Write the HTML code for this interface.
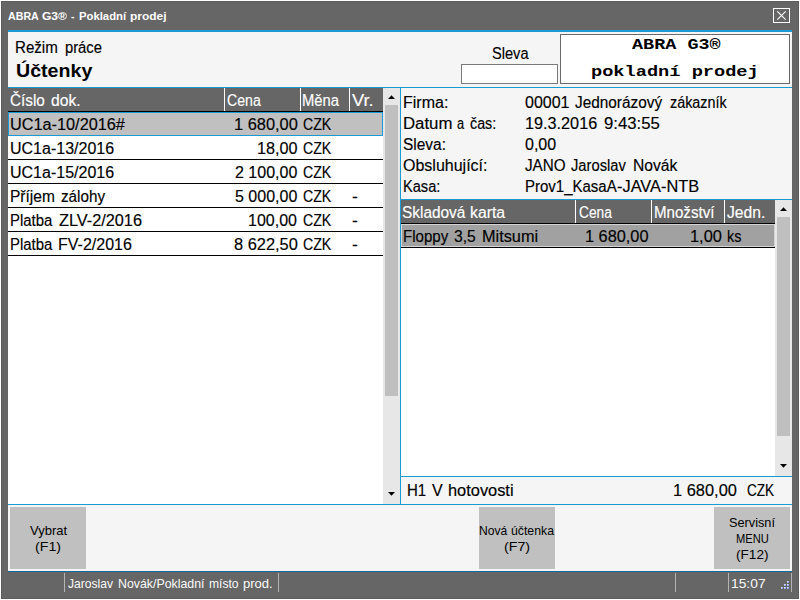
<!DOCTYPE html>
<html lang="cs"><head><meta charset="utf-8"><title>ABRA G3 - Pokladní prodej</title>
<style>
html,body{margin:0;padding:0}
body{width:800px;height:600px;overflow:hidden;background:#fff;position:relative;font-family:"Liberation Sans",sans-serif;font-size:16px;color:#000}
.a{position:absolute}
.t{position:absolute;white-space:nowrap;line-height:20px;height:20px;color:#000;transform-origin:0 0}
.s{font-size:16px;-webkit-text-stroke:0.15px}
.h{font-size:18px;font-weight:bold}
.b{font-size:11px;font-weight:bold}
.m{font-size:13px}
.c{font-family:"Liberation Mono",monospace;font-weight:bold;font-size:15px}
.t.w{color:#fff}
.hl{position:absolute;height:1px;background:#000}
.bl{position:absolute;background:#1b99d4}
.sep{position:absolute;width:1px;background:#fff}
.btn{position:absolute;background:#c0c0c0;width:76px;height:62px;top:507px}
.g{position:absolute;width:2px;height:2px;background:linear-gradient(135deg,#ffffff 0%,#aebcff 50%,#4f6ef2 100%)}
.ss{position:absolute;width:1px;top:573px;height:19px;background:#b4b4b4}
</style></head><body>
<!-- window frame -->
<div class="a" style="left:1px;top:1px;width:798px;height:598px;background:#5c5c5c"></div>
<div class="a" style="left:2px;top:2px;width:796px;height:596px;background:#666"></div>
<!-- close button -->
<svg class="a" style="left:773px;top:8px" width="17" height="15" viewBox="0 0 17 15"><rect x="0.5" y="0.5" width="16" height="14" fill="none" stroke="#fff"/><path d="M4.3 3.3L12.7 11.7M12.7 3.3L4.3 11.7" stroke="#fff" stroke-width="1.1" fill="none"/></svg>
<!-- main panel -->
<div class="a" style="left:8px;top:30px;width:784px;height:542px;background:#f5f5f5"></div>
<div class="bl" style="left:8px;top:30px;width:784px;height:2px"></div>
<div class="a" style="left:461px;top:64px;width:95px;height:18px;border:1px solid #7a7a7a;background:#fff"></div>
<div class="a" style="left:560px;top:34px;width:228px;height:48px;border:1px solid #6a6a6a;background:#fff"></div>
<div class="bl" style="left:8px;top:87px;width:784px;height:1px"></div>
<!-- left table -->
<div class="a" style="left:8px;top:88px;width:375px;height:416px;background:#fff"></div>
<div class="a" style="left:8px;top:88px;width:375px;height:23px;background:#666"></div>
<div class="hl" style="left:8px;top:111px;width:375px"></div>
<div class="sep" style="left:224px;top:88px;height:23px"></div>
<div class="sep" style="left:300px;top:88px;height:23px"></div>
<div class="sep" style="left:349px;top:88px;height:23px"></div>
<div class="a" style="left:8px;top:112px;width:373px;height:22px;background:#c0c0c0;border:1px solid #1b99d4"></div>
<div class="hl" style="left:8px;top:159px;width:375px"></div>
<div class="hl" style="left:8px;top:183px;width:375px"></div>
<div class="hl" style="left:8px;top:207px;width:375px"></div>
<div class="hl" style="left:8px;top:231px;width:375px"></div>
<div class="hl" style="left:8px;top:255px;width:375px"></div>
<!-- left scrollbar -->
<div class="a" style="left:383px;top:88px;width:17px;height:416px;background:#e7e7e7"></div>
<div class="a" style="left:385px;top:105px;width:13px;height:291px;background:#bfbfbf"></div>
<svg class="a" style="left:387px;top:94px" width="9" height="6"><path d="M1 5L4.5 1.2L8 5Z" fill="#000"/></svg>
<svg class="a" style="left:387px;top:491px" width="9" height="6"><path d="M1 1L4.5 4.8L8 1Z" fill="#000"/></svg>
<div class="bl" style="left:400px;top:88px;width:1px;height:416px"></div>
<div class="bl" style="left:401px;top:199px;width:391px;height:1px"></div>
<!-- right table -->
<div class="a" style="left:401px;top:200px;width:374px;height:276px;background:#fff"></div>
<div class="a" style="left:401px;top:200px;width:374px;height:23px;background:#666"></div>
<div class="hl" style="left:401px;top:223px;width:374px"></div>
<div class="sep" style="left:575px;top:200px;height:23px"></div>
<div class="sep" style="left:651px;top:200px;height:23px"></div>
<div class="sep" style="left:724px;top:200px;height:23px"></div>
<div class="a" style="left:401px;top:224px;width:372px;height:21px;background:#a1a1a1;border:1px solid #d4d4d4"></div>
<div class="hl" style="left:401px;top:247px;width:374px"></div>
<!-- right scrollbar -->
<div class="a" style="left:775px;top:200px;width:17px;height:276px;background:#e7e7e7"></div>
<div class="a" style="left:777px;top:217px;width:13px;height:219px;background:#bfbfbf"></div>
<svg class="a" style="left:779px;top:206px" width="9" height="6"><path d="M1 5L4.5 1.2L8 5Z" fill="#000"/></svg>
<svg class="a" style="left:779px;top:463px" width="9" height="6"><path d="M1 1L4.5 4.8L8 1Z" fill="#000"/></svg>
<div class="bl" style="left:401px;top:476px;width:391px;height:1px"></div>
<div class="bl" style="left:8px;top:504px;width:784px;height:1px"></div>
<!-- buttons -->
<div class="btn" style="left:10px"></div>
<div class="btn" style="left:479px"></div>
<div class="btn" style="left:714px"></div>
<!-- status bar -->
<div class="a" style="left:8px;top:571px;width:784px;height:1px;background:#0e6a9a"></div>
<div class="a" style="left:2px;top:572px;width:796px;height:26px;background:#666"></div>
<div class="ss" style="left:64px"></div><div class="ss" style="left:278px"></div><div class="ss" style="left:675px"></div><div class="ss" style="left:728px"></div><div class="ss" style="left:791px"></div>
<div class="g" style="left:787px;top:581px"></div><div class="g" style="left:784px;top:584px"></div><div class="g" style="left:787px;top:584px"></div><div class="g" style="left:781px;top:587px"></div><div class="g" style="left:784px;top:587px"></div><div class="g" style="left:787px;top:587px"></div>
<!-- text -->
<div class="t b w" style="left:8px;top:6px;transform:scaleX(0.9688)">ABRA</div>
<div class="t b w" style="left:42px;top:6px;transform:scaleX(1.0957)">G3®</div>
<div class="t b w" style="left:71px;top:6px;transform:scaleX(0.9500)">-</div>
<div class="t b w" style="left:79px;top:6px;transform:scaleX(1.0272)">Pokladní</div>
<div class="t b w" style="left:130px;top:6px;transform:scaleX(1.0879)">prodej</div>
<div class="t s" style="left:15px;top:38px;transform:scaleX(0.9444)">Režim</div>
<div class="t s" style="left:65px;top:38px;transform:scaleX(0.9225)">práce</div>
<div class="t h" style="left:16px;top:61px;transform:scaleX(1.0900)">Účtenky</div>
<div class="t s" style="left:492px;top:44px;transform:scaleX(0.9122)">Sleva</div>
<div class="t c" style="left:632px;top:36px;transform:scaleX(1.2306)">ABRA G3®</div>
<div class="t c" style="left:591px;top:63px;transform:scaleX(1.2421)">pokladní prodej</div>
<div class="t s w" style="left:10px;top:91px;transform:scaleX(0.9556)">Číslo</div>
<div class="t s w" style="left:51px;top:91px;transform:scaleX(0.9793)">dok.</div>
<div class="t s w" style="left:227px;top:91px;transform:scaleX(0.8821)">Cena</div>
<div class="t s w" style="left:302px;top:91px;transform:scaleX(0.9268)">Měna</div>
<div class="t s w" style="left:352px;top:91px;transform:scaleX(1.1444)">Vr.</div>
<div class="t s" style="left:10px;top:115px;transform:scaleX(1.0168)">UC1a-10/2016#</div>
<div class="t s" style="left:10px;top:139px">UC1a-13/2016</div>
<div class="t s" style="left:10px;top:163px">UC1a-15/2016</div>
<div class="t s" style="left:10px;top:187px;transform:scaleX(0.9696)">Příjem</div>
<div class="t s" style="left:61px;top:187px;transform:scaleX(0.9511)">zálohy</div>
<div class="t s" style="left:10px;top:211px;transform:scaleX(0.9326)">Platba</div>
<div class="t s" style="left:59px;top:211px;transform:scaleX(1.0173)">ZLV-2/2016</div>
<div class="t s" style="left:10px;top:235px;transform:scaleX(0.9326)">Platba</div>
<div class="t s" style="left:58px;top:235px">FV-2/2016</div>
<div class="t s" style="left:234px;top:115px;transform:scaleX(1.0242)">1 680,00</div>
<div class="t s" style="left:303px;top:115px;transform:scaleX(0.8828)">CZK</div>
<div class="t s" style="left:257px;top:139px;transform:scaleX(1.0125)">18,00</div>
<div class="t s" style="left:303px;top:139px;transform:scaleX(0.8828)">CZK</div>
<div class="t s" style="left:235px;top:163px">2 100,00</div>
<div class="t s" style="left:303px;top:163px;transform:scaleX(0.8828)">CZK</div>
<div class="t s" style="left:235px;top:187px">5 000,00</div>
<div class="t s" style="left:303px;top:187px;transform:scaleX(0.8828)">CZK</div>
<div class="t s" style="left:352px;top:187px;transform:scaleX(1.1000)">-</div>
<div class="t s" style="left:248px;top:211px">100,00</div>
<div class="t s" style="left:303px;top:211px;transform:scaleX(0.8828)">CZK</div>
<div class="t s" style="left:352px;top:211px;transform:scaleX(1.1000)">-</div>
<div class="t s" style="left:234px;top:235px;transform:scaleX(1.0242)">8 622,50</div>
<div class="t s" style="left:303px;top:235px;transform:scaleX(0.8828)">CZK</div>
<div class="t s" style="left:352px;top:235px;transform:scaleX(1.1000)">-</div>
<div class="t s" style="left:403px;top:93px">Firma:</div>
<div class="t s" style="left:525px;top:93px">00001</div>
<div class="t s" style="left:575px;top:93px;transform:scaleX(0.9604)">Jednorázový</div>
<div class="t s" style="left:670px;top:93px;transform:scaleX(0.8984)">zákazník</div>
<div class="t s" style="left:403px;top:114px;transform:scaleX(1.0489)">Datum</div>
<div class="t s" style="left:457px;top:114px;transform:scaleX(0.8000)">a</div>
<div class="t s" style="left:470px;top:114px;transform:scaleX(0.8929)">čas:</div>
<div class="t s" style="left:525px;top:114px;transform:scaleX(1.0141)">19.3.2016</div>
<div class="t s" style="left:604px;top:114px;transform:scaleX(1.0453)">9:43:55</div>
<div class="t s" style="left:403px;top:135px;transform:scaleX(0.9651)">Sleva:</div>
<div class="t s" style="left:525px;top:135px">0,00</div>
<div class="t s" style="left:403px;top:156px">Obsluhující:</div>
<div class="t s" style="left:525px;top:156px;transform:scaleX(0.9524)">JANO</div>
<div class="t s" style="left:571px;top:156px;transform:scaleX(0.9200)">Jaroslav</div>
<div class="t s" style="left:633px;top:156px;transform:scaleX(0.9778)">Novák</div>
<div class="t s" style="left:403px;top:177px;transform:scaleX(0.9125)">Kasa:</div>
<div class="t s" style="left:525px;top:177px;transform:scaleX(0.9367)">Prov1_KasaA</div>
<div class="t s" style="left:617px;top:177px;transform:scaleX(1.0225)">-JAVA-NTB</div>
<div class="t s w" style="left:402px;top:203px;transform:scaleX(0.9621)">Skladová</div>
<div class="t s w" style="left:470px;top:203px;transform:scaleX(0.9861)">karta</div>
<div class="t s w" style="left:579px;top:203px;transform:scaleX(0.8590)">Cena</div>
<div class="t s w" style="left:654px;top:203px;transform:scaleX(0.9437)">Množství</div>
<div class="t s w" style="left:727px;top:203px;transform:scaleX(0.9789)">Jedn.</div>
<div class="t s" style="left:403px;top:227px;transform:scaleX(0.9427)">Floppy</div>
<div class="t s" style="left:454px;top:227px;transform:scaleX(0.9773)">3,5</div>
<div class="t s" style="left:482px;top:227px;transform:scaleX(1.0185)">Mitsumi</div>
<div class="t s" style="left:585px;top:227px;transform:scaleX(1.0194)">1 680,00</div>
<div class="t s" style="left:690px;top:227px;transform:scaleX(1.0226)">1,00</div>
<div class="t s" style="left:727px;top:227px;transform:scaleX(0.9000)">ks</div>
<div class="t s" style="left:407px;top:481px;transform:scaleX(0.9375)">H1</div>
<div class="t s" style="left:432px;top:481px">V</div>
<div class="t s" style="left:448px;top:481px;transform:scaleX(1.0238)">hotovosti</div>
<div class="t s" style="left:673px;top:481px;transform:scaleX(1.0258)">1 680,00</div>
<div class="t s" style="left:747px;top:481px;transform:scaleX(0.8469)">CZK</div>
<div class="t m" style="left:30px;top:521px">Vybrat</div>
<div class="t m" style="left:35px;top:537px;transform:scaleX(1.0913)">(F1)</div>
<div class="t m" style="left:479px;top:521px;transform:scaleX(0.9300)">Nová</div>
<div class="t m" style="left:511px;top:521px;transform:scaleX(0.9435)">účtenka</div>
<div class="t m" style="left:504px;top:537px;transform:scaleX(1.0957)">(F7)</div>
<div class="t m" style="left:729px;top:513px;transform:scaleX(0.9787)">Servisní</div>
<div class="t m" style="left:736px;top:529px;transform:scaleX(0.8579)">MENU</div>
<div class="t m" style="left:736px;top:545px;transform:scaleX(1.0452)">(F12)</div>
<div class="t m" style="left:68px;top:574px;transform:scaleX(0.9306);color:#fafafa">Jaroslav</div>
<div class="t m" style="left:118px;top:574px;transform:scaleX(0.9495);color:#fafafa">Novák/Pokladní</div>
<div class="t m" style="left:209px;top:574px;transform:scaleX(0.9313);color:#fafafa">místo</div>
<div class="t m" style="left:243px;top:574px;color:#fafafa">prod.</div>
<div class="t m" style="left:731px;top:574px;transform:scaleX(1.0625);color:#fafafa">15:07</div>
</body></html>
